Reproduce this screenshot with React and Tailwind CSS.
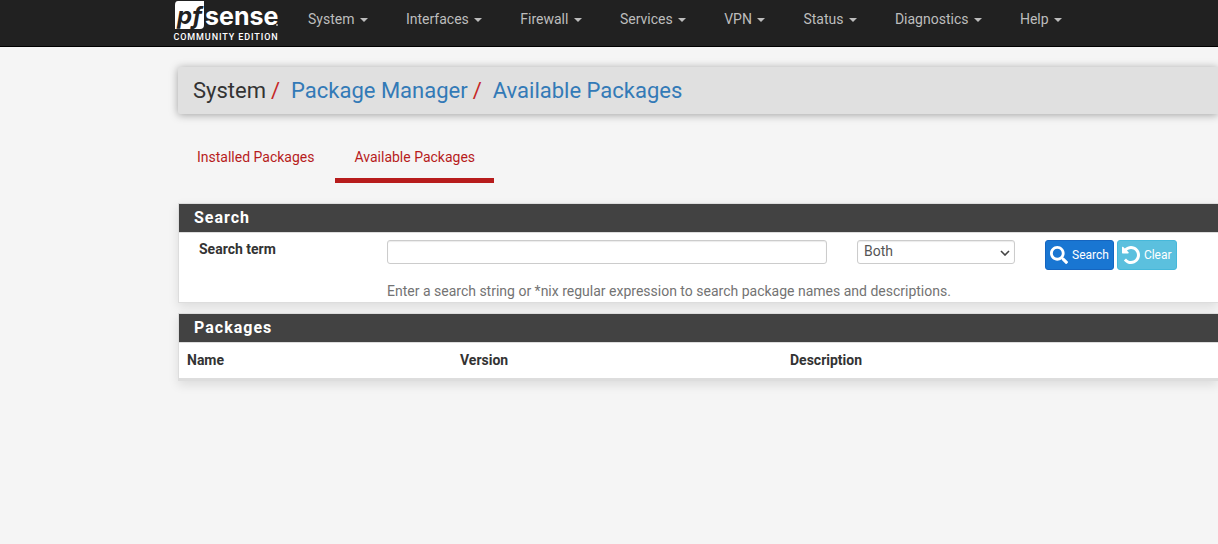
import { FaSearch } from "react-icons/fa";

const MENUS = ["System", "Interfaces", "Firewall", "Services", "VPN", "Status", "Diagnostics", "Help"];

function Logo() {
  return (
    <a href="#home" aria-label="pfSense Community Edition" className="flex w-[108px] shrink-0 flex-col items-center">
      <svg viewBox="0 0 108 29" className="h-[29px] w-[108px] overflow-visible" aria-hidden="true">
        <path d="M6 1H32V25Q32 29 28 29H3V5Q3 1 6 1Z" fill="#fff" />
        <text x="5" y="24" fontFamily="Inter, sans-serif" fontWeight="700" fontStyle="italic" fontSize="24" fill="#212121">
          pf
        </text>
        <text x="33" y="25" fontFamily="Inter, sans-serif" fontWeight="700" fontSize="25" fill="#fff">
          sense
        </text>
        <circle cx="105" cy="25" r="1" fill="#bbb" />
      </svg>
      <span className="mt-[2px] text-[9px] leading-[12px] font-medium tracking-widest whitespace-nowrap text-white">
        COMMUNITY EDITION
      </span>
    </a>
  );
}

function UndoIcon() {
  return (
    <svg viewBox="128 128 1536 1536" className="h-[18px] w-[18px]" fill="currentColor" aria-hidden="true">
      <path d="M1664 896q0 156-61 298t-164 245-245 164-298 61q-172 0-327-72.5t-264-204.5q-7-10-6.5-22.5t8.5-20.5l137-138q10-9 25-9 16 2 23 12 73 95 179 147t225 52q104 0 198.5-40.5t163.5-109.5 109.5-163.5 40.5-198.5-40.5-198.5-109.5-163.5-163.5-109.5-198.5-40.5q-98 0-188 35.5t-160 101.5l137 138q31 30 14 69-17 40-59 40h-448q-26 0-45-19t-19-45v-448q0-42 40-59 39-17 69 14l130 129q107-101 244.5-156.5t284.5-55.5q156 0 298 61t245 164 164 245 61 298z" />
    </svg>
  );
}

function PanelHeading({ children }) {
  return (
    <h2 className="border-b border-[#dddddd] bg-[#424242] px-[15px] text-[16px] leading-[28px] font-bold tracking-[1px] text-white">
      {children}
    </h2>
  );
}

export default function App() {
  return (
    <div className="min-h-screen overflow-hidden bg-[#f5f5f5] font-['Roboto',sans-serif] text-[14px] leading-[20px] text-[#333333]">
      <header className="flex h-[47px] border-b border-black bg-[#212121] pl-[172px]">
        <Logo />
        <nav className="flex pl-[9px]">
          {MENUS.map((name) => (
            <a key={name} href={`#${name.toLowerCase()}`} className="px-[19px] py-[9px] whitespace-nowrap text-[#bdbdbd]">
              {name}{" "}
              <span className="ml-[2px] inline-block border-x-4 border-t-4 border-x-transparent border-t-[#bdbdbd] align-middle" />
            </a>
          ))}
        </nav>
      </header>

      <main className="pt-[20px] pl-[178px]">
        <div className="rounded-l-[2px] bg-[#e0e0e0] px-[15px] text-[22px] leading-[47px] shadow-[0_1px_8px_rgba(0,0,0,0.35)]">
          <nav aria-label="Breadcrumb" className="flex">
            <span>System</span>
            <span className="pr-[11px] pl-[5px] text-[#c62828]">/</span>
            <a href="#packages" className="text-[#337ab7]">Package Manager</a>
            <span className="pr-[11px] pl-[5px] text-[#c62828]">/</span>
            <a href="#available" className="text-[#337ab7]">Available Packages</a>
          </nav>
        </div>

        <nav aria-label="Packages" className="mt-[18px] mb-[20px] flex text-[#b71c1c]">
          <a href="#installed" className="border-b-[5px] border-transparent px-[19px] pt-[15px] pb-[11px]">Installed Packages</a>
          <a href="#available" className="ml-[2px] border-b-[5px] border-[#b71c1c] px-[19px] pt-[15px] pb-[11px]">Available Packages</a>
        </nav>

        <section className="mb-[10px] border border-r-0 border-[#dddddd] bg-white shadow-[0_4px_10px_rgba(0,0,0,0.1)]">
          <PanelHeading>Search</PanelHeading>
          <form className="flex items-start pt-[7px] pb-px pl-[20px]" onSubmit={(e) => e.preventDefault()}>
            <label htmlFor="term" className="w-[188px] shrink-0 leading-[18px] font-bold">Search term</label>
            <div className="flex flex-col">
              <div className="flex items-start gap-[30px]">
                <input
                  id="term"
                  type="text"
                  className="h-[24px] w-[440px] rounded-[3px] border border-[#cccccc] bg-white px-[6px] text-[#555555] shadow-[inset_0_1px_1px_rgba(0,0,0,0.08)]"
                />
                <div className="relative">
                  <select
                    aria-label="Search in"
                    defaultValue="Both"
                    className="block h-[24px] w-[158px] appearance-none rounded-[3px] border border-[#cccccc] bg-white px-[6px] pb-[2px] text-[#555555] shadow-[inset_0_1px_1px_rgba(0,0,0,0.08)]"
                  >
                    <option>Name</option>
                    <option>Description</option>
                    <option>Both</option>
                  </select>
                  <svg viewBox="0 0 10 6" className="pointer-events-none absolute top-[10px] right-[5px] h-[6px] w-[10px]" fill="none" stroke="#444" strokeWidth="1.6">
                    <path d="M1 1L5 5L9 1" />
                  </svg>
                </div>
                <div className="flex gap-[3px] text-[12px] text-white">
                  <button type="submit" className="flex h-[30px] items-center gap-[4px] rounded-[3px] border border-[#1565c0] bg-[#1976d2] px-[4px]">
                    <FaSearch size={18} />
                    Search
                  </button>
                  <button type="reset" className="flex h-[30px] items-center gap-[4px] rounded-[3px] border border-[#46b8da] bg-[#5bc0de] px-[4px]">
                    <UndoIcon />
                    Clear
                  </button>
                </div>
              </div>
              <p className="mt-[11px] text-[#737373]">
                Enter a search string or *nix regular expression to search package names and descriptions.
              </p>
            </div>
          </form>
        </section>

        <section className="border border-r-0 border-b-[3px] border-[#dddddd] bg-white shadow-[0_4px_10px_rgba(0,0,0,0.1)]">
          <PanelHeading>Packages</PanelHeading>
          <table className="w-full table-fixed text-left">
            <thead>
              <tr>
                <th className="w-[273px] px-[8px] pt-[7px] pb-[8px] font-bold">Name</th>
                <th className="w-[330px] px-[8px] pt-[7px] pb-[8px] font-bold">Version</th>
                <th className="px-[8px] pt-[7px] pb-[8px] font-bold">Description</th>
              </tr>
            </thead>
          </table>
        </section>
      </main>
    </div>
  );
}
